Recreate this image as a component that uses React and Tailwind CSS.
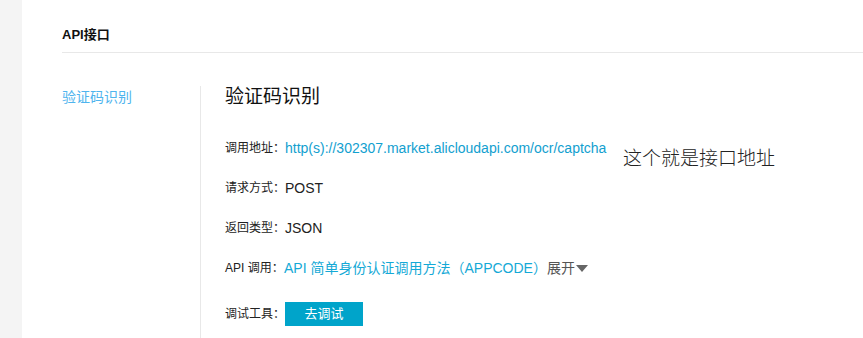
export default function App() {
  const cjk = { fontFamily: '"Liberation Sans", "Noto Sans CJK SC", sans-serif' };
  return (
    <div className="relative flex h-[338px] w-[863px] overflow-hidden bg-white text-[#333]" style={cjk}>
      <div className="w-[22px] shrink-0 bg-[#f4f4f4]" />
      <div className="flex-1 pl-[40px]">
        <div className="flex h-[53px] items-end border-b border-[#e8e8e8] pb-[9px]">
          <span className="text-[13px] font-bold leading-[17px] text-[#111]">API接口</span>
        </div>
        <div className="mt-[33px] flex">
          <div className="w-[138px] shrink-0 pt-[1px] text-[14px] leading-[20px] text-[#4fb4ee]">验证码识别</div>
          <div className="h-[260px] flex-1 border-l border-[#e8e8e8] pl-[24px]">
            <div className="text-[19px] leading-[22px] text-[#111]">验证码识别</div>
            <div className="mt-[30px] flex flex-col gap-[20px] text-[12px] leading-[20px]">
              <div className="flex items-center">
                <span className="w-[60px] shrink-0 text-[#222]">调用地址：</span>
                <span className="text-[14px] text-[#12a0cf]">http(s)://302307.market.alicloudapi.com/ocr/captcha</span>
              </div>
              <div className="flex items-center">
                <span className="w-[60px] shrink-0 text-[#222]">请求方式：</span>
                <span className="text-[14px] text-[#222]">POST</span>
              </div>
              <div className="flex items-center">
                <span className="w-[60px] shrink-0 text-[#222]">返回类型：</span>
                <span className="text-[14px] text-[#222]">JSON</span>
              </div>
              <div className="flex items-center">
                <span className="w-[59px] shrink-0 text-[#222]">API 调用：</span>
                <span className="text-[14px] text-[#14a9d6]">API 简单身份认证调用方法（APPCODE）</span>
                <span className="text-[14px] text-[#555]">展开</span>
                <svg width="12" height="7" viewBox="0 0 12 7" className="ml-[1px]">
                  <path d="M0 0H12L6 7Z" fill="#666" />
                </svg>
              </div>
              <div className="mt-[4px] flex items-center">
                <span className="w-[60px] shrink-0 text-[#222]">调试工具：</span>
                <button className="flex h-[24px] w-[78px] items-center justify-center bg-[#00a4ca] text-[13px] text-white">去调试</button>
              </div>
            </div>
          </div>
        </div>
      </div>
      <div className="absolute left-[623px] top-[147px] text-[19px] font-light leading-[24px] text-[#222]">这个就是接口地址</div>
    </div>
  );
}
